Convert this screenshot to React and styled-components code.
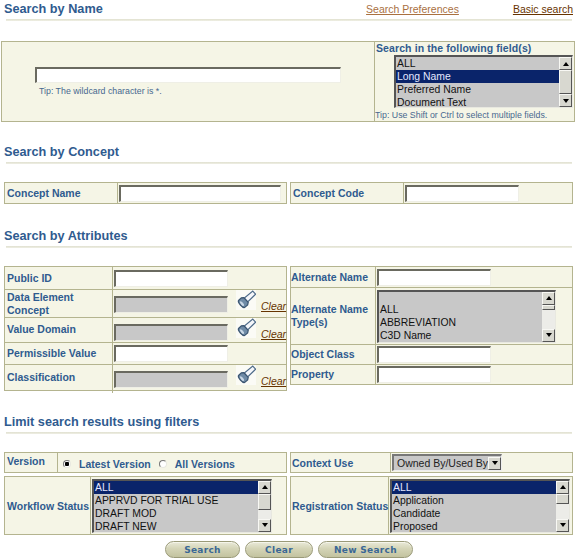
import React from 'react'
import styled, { createGlobalStyle } from 'styled-components'

const Global = createGlobalStyle`
  html, body { margin: 0; padding: 0; background: #fff; }
  body { font-family: "Liberation Sans", Arial, sans-serif; font-size: 11px; color: #000; }
`

const Page = styled.div`
  width: 576px;
  height: 560px;
  overflow: hidden;
  display: flex;
  flex-direction: column;
`

const HeadRow = styled.div`
  height: 19px;
  margin-top: ${p => p.$top || 0}px;
  padding: 0 3px 2px 4px;
  box-sizing: border-box;
  display: flex;
  align-items: center;
`

const Heading = styled.h2`
  flex: 1;
  margin: 0;
  font-size: 12.7px;
  line-height: 16px;
  font-weight: 700;
  color: #2f5b8f;
`

const TopLink = styled.a`
  font-size: 10.5px;
  text-decoration: underline;
  color: ${p => (p.$muted ? '#a9703f' : '#663300')};
  margin-left: ${p => p.$gap || 0}px;
`

const Rule = styled.div`
  height: 2px;
  margin: 0 4px 0 6px;
  background: linear-gradient(#e0e0cf, #efefe4);
  margin-bottom: ${p => p.$bottom || 18}px;
`

const NameBox = styled.div`
  height: 81px;
  margin: 0 1px;
  box-sizing: border-box;
  border: 1px solid #b4b48f;
  background: #f5f5e6;
  display: grid;
  grid-template-columns: 372px 1fr;
`

const NameLeft = styled.div`
  padding: 25px 0 0 33px;
  display: flex;
  flex-direction: column;
`

const NameRight = styled.div`
  border-left: 1px solid #b4b48f;
  padding-left: 1px;
  display: flex;
  flex-direction: column;
`

const FieldsTitle = styled.div`
  font-size: 10.5px;
  line-height: 13px;
  font-weight: 700;
  letter-spacing: 0.1px;
  color: #2f5b8f;
`

const Tip = styled.div`
  font-size: 8.8px;
  line-height: 12px;
  white-space: nowrap;
  color: #47688f;
  margin: ${p => p.$margin || 0};
`

const Columns = styled.div`
  display: grid;
  grid-template-columns: 283px 283px;
  column-gap: 3px;
  align-items: start;
  padding-left: 4px;
  margin-bottom: ${p => p.$bottom || 0}px;
`

const Panel = styled.div`
  border: 1px solid #b4b48f;
  background: #f5f5e6;
  box-sizing: border-box;
`

const Row = styled.div`
  display: grid;
  grid-template-columns: ${p => p.$label}px 1fr;
  height: ${p => p.$height}px;
  box-sizing: border-box;
  & + & { border-top: 1px solid #b4b48f; }
`

const Label = styled.div`
  display: flex;
  align-items: center;
  white-space: nowrap;
  padding: ${p => p.$drop || 0}px 0 ${p => p.$lift || 0}px ${p => p.$indent ?? 2}px;
  border-right: 1px solid #b4b48f;
  font-size: 10.5px;
  line-height: 13px;
  font-weight: 700;
  color: #2f5b8f;
`

const Field = styled.div`
  display: flex;
  align-items: center;
  padding-left: 1px;
`

const TextInput = styled.input`
  display: block;
  width: ${p => p.$width}px;
  height: ${p => p.$height || 17}px;
  margin: 0;
  padding: 0;
  box-sizing: border-box;
  border-style: solid;
  border-width: 2px 1px 1px 2px;
  border-color: #6a6a60 #efefe6 #efefe6 #6a6a60;
  background: ${p => (p.disabled ? '#c8c8c8' : '#fff')};
`

const IconSpot = styled.span`
  width: 20px;
  height: 20px;
  margin-left: 8px;
  margin-bottom: 8px;
  background: #fbfbf6;
  flex: none;
`

const ClearLink = styled.a`
  margin-left: 5px;
  margin-top: 4px;
  font-size: 10.5px;
  font-style: italic;
  text-decoration: underline;
  color: #663300;
`

const ListBox = styled.div`
  width: ${p => p.$width}px;
  height: ${p => p.$height}px;
  box-sizing: border-box;
  margin-left: ${p => p.$left || 0}px;
  border-style: solid;
  border-width: 2px 1px 1px 2px;
  border-color: #555 #e8e8e0 #e8e8e0 #555;
  background: #c8c8c8;
  display: flex;
  flex: none;
`

const Options = styled.div`
  flex: 1;
  min-width: 0;
  display: flex;
  flex-direction: column;
  justify-content: ${p => (p.$bottom ? 'flex-end' : 'flex-start')};
`

const Option = styled.div`
  height: 13px;
  line-height: 13px;
  padding-left: 1px;
  font-size: 10.4px;
  white-space: nowrap;
  background: ${p => (p.$selected ? '#0a246a' : 'transparent')};
  color: ${p => (p.$selected ? '#e4e8ff' : '#111')};
`

const ScrollBar = styled.div`
  width: 13px;
  flex: none;
  background: #ecece8;
  display: flex;
  flex-direction: column;
`

const ScrollButton = styled.div`
  width: ${p => p.$width || 13}px;
  height: ${p => p.$height || 13}px;
  margin-top: ${p => (p.$push ? 'auto' : `${p.$top || 0}px`)};
  box-sizing: border-box;
  flex: none;
  background: #d8d8d0;
  border-style: solid;
  border-width: 1px;
  border-color: #f8f8f4 #555 #555 #f8f8f4;
  display: flex;
  align-items: center;
  justify-content: center;
`

const Arrow = styled.span`
  width: 0;
  height: 0;
  border-left: 3px solid transparent;
  border-right: 3px solid transparent;
  border-${p => (p.$up ? 'bottom' : 'top')}: 4px solid #000;
`

const VersionCell = styled.div`
  display: flex;
  align-items: center;
  padding: 3px 0 0 5px;
  font-size: 10.5px;
  font-weight: 700;
  white-space: nowrap;
  color: #2f5b8f;
`

const Radio = styled.span`
  width: 8px;
  height: 8px;
  box-sizing: border-box;
  border-radius: 50%;
  border: 1px solid #777;
  border-right-color: #e8e8e0;
  border-bottom-color: #e8e8e0;
  background: ${p => (p.$on ? 'radial-gradient(circle, #000 0 2px, #fff 2.5px)' : '#fff')};
  margin: 0 8px 0 ${p => p.$left || 0}px;
  flex: none;
`

const Combo = styled.div`
  width: 110px;
  height: 17px;
  box-sizing: border-box;
  border-style: solid;
  border-width: 2px 1px 1px 2px;
  border-color: #777 #eee #eee #777;
  background: #c8c8c8;
  display: flex;
  align-items: center;
  justify-content: space-between;
  padding-left: 3px;
  font-size: 10.5px;
  white-space: nowrap;
  color: #222;
`

const Buttons = styled.div`
  display: flex;
  justify-content: flex-start;
  gap: 5px;
  margin-top: 6px;
  padding-left: 165px;
`

const Pill = styled.button`
  width: ${p => p.$width}px;
  height: 17px;
  margin: 0;
  padding: 0;
  border: 1px solid #9a9a78;
  border-radius: 9px;
  background: linear-gradient(#e9e9d8 0%, #d4d4b6 45%, #c3c3a0 100%);
  box-shadow: inset 0 1px 0 #f5f5ea;
  font-family: "DejaVu Sans", sans-serif;
  font-size: 9px;
  font-weight: 700;
  letter-spacing: 0.3px;
  color: #3a6795;
`

function Flashlight() {
  return (
    <svg width="20" height="20" viewBox="0 0 20 20">
      <g transform="rotate(48 10 10)">
        <path d="M7.9 -1 h4.2 l0.4 11 h-5 z" fill="#f4f6fa" stroke="#4d6a88" strokeWidth="1.2" />
        <path d="M6.7 10 h6.6 l1.4 2 v3.5 a4.7 2 0 0 1 -9.4 0 v-3.5 z" fill="#6f8ba6" stroke="#3a5470" strokeWidth="1.2" />
        <ellipse cx="10" cy="15.4" rx="2.8" ry="1.2" fill="#c9d8e6" />
      </g>
    </svg>
  )
}

function List({ width, height, left, items, selected, bottom, thumbTop = 0, thumb = 24 }) {
  return (
    <ListBox $width={width} $height={height} $left={left}>
      <Options $bottom={bottom}>
        {items.map(item => (
          <Option key={item} $selected={item === selected}>{item}</Option>
        ))}
      </Options>
      <ScrollBar>
        <ScrollButton><Arrow $up /></ScrollButton>
        <ScrollButton $height={thumb} $top={thumbTop} />
        <ScrollButton $push><Arrow /></ScrollButton>
      </ScrollBar>
    </ListBox>
  )
}

function LookupField() {
  return (
    <Field>
      <TextInput $width={114} disabled />
      <IconSpot><Flashlight /></IconSpot>
      <ClearLink>Clear</ClearLink>
    </Field>
  )
}

export default function App() {
  return (
    <Page>
      <Global />

      <HeadRow>
        <Heading>Search by Name</Heading>
        <TopLink $muted>Search Preferences</TopLink>
        <TopLink $gap={54}>Basic search</TopLink>
      </HeadRow>
      <Rule $bottom={20} />
      <NameBox>
        <NameLeft>
          <TextInput $width={306} $height={16} />
          <Tip $margin="2px 0 0 4px">Tip: The wildcard character is *.</Tip>
        </NameLeft>
        <NameRight>
          <FieldsTitle>Search in the following field(s)</FieldsTitle>
          <List
            width={179}
            height={53}
            left={18}
            items={['ALL', 'Long Name', 'Preferred Name', 'Document Text']}
            selected="Long Name"
          />
          <Tip $margin="1px 0 0 -1px">Tip: Use Shift or Ctrl to select multiple fields.</Tip>
        </NameRight>
      </NameBox>

      <HeadRow $top={21}>
        <Heading>Search by Concept</Heading>
      </HeadRow>
      <Rule />
      <Columns>
        <Panel>
          <Row $label={113} $height={20}>
            <Label $drop={1}>Concept Name</Label>
            <Field><TextInput $width={162} /></Field>
          </Row>
        </Panel>
        <Panel>
          <Row $label={113} $height={20}>
            <Label $drop={1}>Concept Code</Label>
            <Field><TextInput $width={114} /></Field>
          </Row>
        </Panel>
      </Columns>

      <HeadRow $top={23}>
        <Heading>Search by Attributes</Heading>
      </HeadRow>
      <Rule />
      <Columns>
        <Panel>
          <Row $label={108} $height={22}>
            <Label>Public ID</Label>
            <Field><TextInput $width={114} /></Field>
          </Row>
          <Row $label={108} $height={28}>
            <Label>Data Element<br />Concept</Label>
            <LookupField />
          </Row>
          <Row $label={108} $height={25}>
            <Label $lift={5}>Value Domain</Label>
            <LookupField />
          </Row>
          <Row $label={108} $height={22}>
            <Label>Permissible Value</Label>
            <Field><TextInput $width={114} /></Field>
          </Row>
          <Row $label={108} $height={26}>
            <Label $lift={4}>Classification</Label>
            <LookupField />
          </Row>
        </Panel>
        <Panel>
          <Row $label={85} $height={20}>
            <Label $indent={0}>Alternate Name</Label>
            <Field><TextInput $width={114} /></Field>
          </Row>
          <Row $label={85} $height={57}>
            <Label $indent={0}>Alternate Name<br />Type(s)</Label>
            <Field>
              <List
                width={179}
                height={53}
                items={['ALL', 'ABBREVIATION', 'C3D Name']}
                bottom
                thumb={5}
              />
            </Field>
          </Row>
          <Row $label={85} $height={20}>
            <Label $indent={0}>Object Class</Label>
            <Field><TextInput $width={114} /></Field>
          </Row>
          <Row $label={85} $height={20}>
            <Label $indent={0}>Property</Label>
            <Field><TextInput $width={114} /></Field>
          </Row>
        </Panel>
      </Columns>

      <HeadRow $top={22}>
        <Heading>Limit search results using filters</Heading>
      </HeadRow>
      <Rule />
      <Columns $bottom={3}>
        <Panel>
          <Row $label={53} $height={19}>
            <Label $lift={3}>Version</Label>
            <VersionCell>
              <Radio $on />Latest Version
              <Radio $left={8} />All Versions
            </VersionCell>
          </Row>
        </Panel>
        <Panel>
          <Row $label={100} $height={19}>
            <Label $indent={1} $drop={1}>Context Use</Label>
            <Field>
              <Combo>
                Owned By/Used By
                <ScrollButton><Arrow /></ScrollButton>
              </Combo>
            </Field>
          </Row>
        </Panel>
      </Columns>
      <Columns>
        <Panel>
          <Row $label={86} $height={57}>
            <Label $drop={1}>Workflow Status</Label>
            <Field>
              <List
                width={180}
                height={54}
                items={['ALL', 'APPRVD FOR TRIAL USE', 'DRAFT MOD', 'DRAFT NEW']}
                selected="ALL"
                thumb={16}
              />
            </Field>
          </Row>
        </Panel>
        <Panel>
          <Row $label={98} $height={57}>
            <Label $indent={1} $drop={1}>Registration Status</Label>
            <Field>
              <List
                width={180}
                height={54}
                items={['ALL', 'Application', 'Candidate', 'Proposed']}
                selected="ALL"
                thumb={10}
              />
            </Field>
          </Row>
        </Panel>
      </Columns>

      <Buttons>
        <Pill $width={75}>Search</Pill>
        <Pill $width={68}>Clear</Pill>
        <Pill $width={95}>New Search</Pill>
      </Buttons>
    </Page>
  )
}
